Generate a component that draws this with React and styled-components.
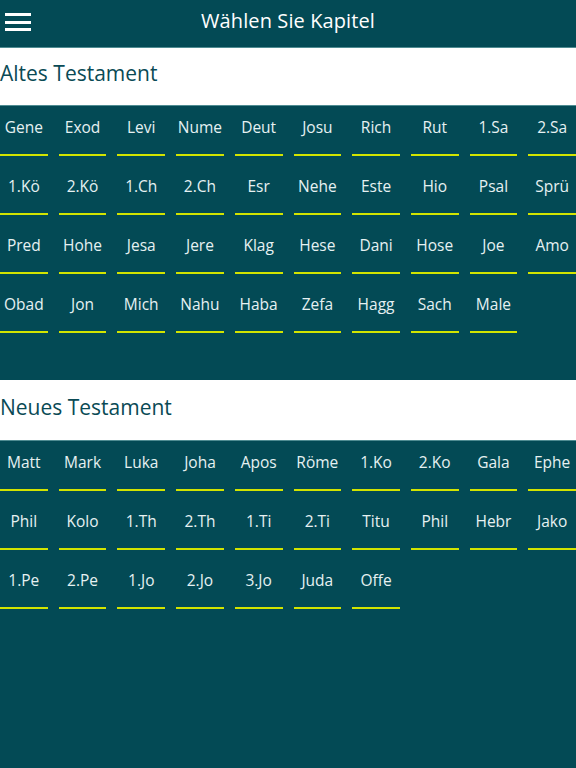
import React from "react";
import styled, { createGlobalStyle } from "styled-components";

const oldTestament = [
  "Gene", "Exod", "Levi", "Nume", "Deut", "Josu", "Rich", "Rut", "1.Sa", "2.Sa",
  "1.Kö", "2.Kö", "1.Ch", "2.Ch", "Esr", "Nehe", "Este", "Hio", "Psal", "Sprü",
  "Pred", "Hohe", "Jesa", "Jere", "Klag", "Hese", "Dani", "Hose", "Joe", "Amo",
  "Obad", "Jon", "Mich", "Nahu", "Haba", "Zefa", "Hagg", "Sach", "Male",
];

const newTestament = [
  "Matt", "Mark", "Luka", "Joha", "Apos", "Röme", "1.Ko", "2.Ko", "Gala", "Ephe",
  "Phil", "Kolo", "1.Th", "2.Th", "1.Ti", "2.Ti", "Titu", "Phil", "Hebr", "Jako",
  "1.Pe", "2.Pe", "1.Jo", "2.Jo", "3.Jo", "Juda", "Offe",
];

const GlobalStyle = createGlobalStyle`
  html, body {
    margin: 0;
    padding: 0;
    background: #034a55;
  }
  body {
    font-family: "Open Sans", "Noto Sans", sans-serif;
  }
`;

const Page = styled.div`
  width: 576px;
  min-height: 768px;
  background: #034a55;
  overflow: hidden;
`;

const TopBar = styled.header`
  height: 48px;
  display: flex;
  align-items: center;
  justify-content: center;
  position: relative;
  padding-bottom: 5px;
  border-bottom: 1px solid #4f8c92;
  box-sizing: border-box;
`;

const MenuButton = styled.button`
  position: absolute;
  left: 5px;
  top: 13px;
  width: 26px;
  height: 18px;
  padding: 0;
  border: none;
  background: transparent;
  display: flex;
  flex-direction: column;
  justify-content: space-between;
  cursor: pointer;
`;

const Bar = styled.span`
  display: block;
  height: 3px;
  width: 100%;
  background: #ffffff;
`;

const Title = styled.h1`
  margin: 0;
  font-size: 20px;
  line-height: 26px;
  font-weight: 400;
  color: #ffffff;
  letter-spacing: 0.1px;
`;

const SectionHeader = styled.div`
  background: #ffffff;
  height: ${({ $height }) => $height}px;
  display: flex;
  align-items: center;
  padding-bottom: ${({ $lift }) => $lift}px;
  box-sizing: border-box;
  border-bottom: 1px solid #4f8c92;
`;

const SectionTitle = styled.h2`
  margin: 0;
  font-size: 21px;
  line-height: 28px;
  font-weight: 500;
  color: #0a4a55;
`;

const Grid = styled.div`
  display: grid;
  grid-template-columns: repeat(10, 1fr);
  column-gap: 11px;
  row-gap: 9px;
  padding-bottom: ${({ $bottom }) => $bottom}px;
`;

const Book = styled.div`
  height: 50px;
  box-sizing: border-box;
  padding-top: 11px;
  border-bottom: 2px solid #d2e400;
  text-align: center;
  font-size: 15.5px;
  line-height: 21px;
  color: #e6f1f2;
  white-space: nowrap;
  cursor: pointer;
`;

const Section = ({ title, books, headerHeight, lift, bottom }) => (
  <>
    <SectionHeader $height={headerHeight} $lift={lift}>
      <SectionTitle>{title}</SectionTitle>
    </SectionHeader>
    <Grid $bottom={bottom}>
      {books.map((b, i) => (
        <Book key={i}>{b}</Book>
      ))}
    </Grid>
  </>
);

export default function App() {
  return (
    <Page>
      <GlobalStyle />
      <TopBar>
        <MenuButton aria-label="Menü">
          <Bar />
          <Bar />
          <Bar />
        </MenuButton>
        <Title>Wählen Sie Kapitel</Title>
      </TopBar>
      <Section
        title="Altes Testament"
        books={oldTestament}
        headerHeight={58}
        lift={8}
        bottom={47}
      />
      <Section
        title="Neues Testament"
        books={newTestament}
        headerHeight={61}
        lift={7}
        bottom={40}
      />
    </Page>
  );
}
